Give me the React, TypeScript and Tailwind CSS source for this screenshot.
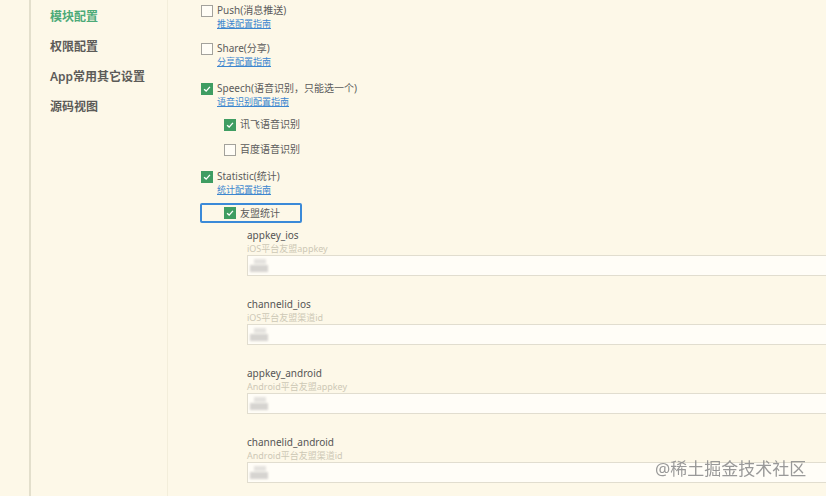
import React from 'react';

const font = { fontFamily: '"Noto Sans", "Noto Sans CJK SC", sans-serif' };

function Box({ checked }: { checked: boolean }) {
  if (checked) {
    return (
      <span className="flex h-[12px] w-[12px] shrink-0 items-center justify-center bg-[#3f9d62]">
        <svg viewBox="0 0 12 12" className="h-[10px] w-[10px]">
          <path d="M2.5 6.2 L5 8.5 L9.5 3.5" fill="none" stroke="#ffffff" strokeWidth="1.6" />
        </svg>
      </span>
    );
  }
  return <span className="h-[12px] w-[12px] shrink-0 border border-[#a3a29c] bg-[#fffdf6]" />;
}

function Option({ label, link, checked, className = '' }: { label: string; link: string; checked: boolean; className?: string }) {
  return (
    <div className={className}>
      <div className="flex h-[13px] items-center gap-[4px] text-[10px] text-[#5b5b5b]">
        <Box checked={checked} />
        <span>{label}</span>
      </div>
      <div className="ml-[16px] h-[13px] text-[9px] leading-[13px] text-[#3c86cf] underline">{link}</div>
    </div>
  );
}

function Sub({ label, checked }: { label: string; checked: boolean }) {
  return (
    <div className="flex h-[25px] items-center gap-[4px] pl-[23px] text-[10px] text-[#5b5b5b]">
      <Box checked={checked} />
      <span>{label}</span>
    </div>
  );
}

function Field({ name, desc, first }: { name: string; desc: string; first?: boolean }) {
  return (
    <div className={first ? 'mt-[6px]' : 'mt-[22px]'}>
      <div className="h-[13px] text-[10px] leading-[13px] text-[#555555]">{name}</div>
      <div className="h-[13px] text-[9px] leading-[13px] text-[#cdc8b6]">{desc}</div>
      <div className="flex h-[21px] items-center border-y border-l border-[#e1ddcf] bg-[#fffdf7] pl-[2px]">
        <div className="flex flex-col gap-[1px] blur-[1px]">
          <div className="ml-[4px] h-[5px] w-[12px] bg-[#e4e2de]" />
          <div className="h-[7px] w-[18px] bg-[#d6d4d0]" />
        </div>
      </div>
    </div>
  );
}

export default function App() {
  return (
    <div className="relative flex h-[496px] w-[826px] overflow-hidden bg-[#fdf8e8]" style={font}>
      <div className="w-[29px] shrink-0" />
      <div className="w-[139px] shrink-0 border-l-2 border-r border-l-[#e3dfcc] border-r-[#f3eedb] pl-[19px] pt-[2px] text-[12px] font-semibold text-[#5c5b58]">
        <div className="h-[30px] leading-[30px] text-[#4caa78]">模块配置</div>
        <div className="h-[30px] leading-[30px]">权限配置</div>
        <div className="h-[30px] leading-[30px]">App常用其它设置</div>
        <div className="h-[30px] leading-[30px]">源码视图</div>
      </div>
      <div className="flex-1 pl-[33px] pt-[4px]">
        <Option label="Push(消息推送)" link="推送配置指南" checked={false} />
        <Option label="Share(分享)" link="分享配置指南" checked={false} className="mt-[12px]" />
        <Option label="Speech(语音识别，只能选一个)" link="语音识别配置指南" checked className="mt-[14px]" />
        <div className="mt-[4px]">
          <Sub label="讯飞语音识别" checked />
          <Sub label="百度语音识别" checked={false} />
        </div>
        <Option label="Statistic(统计)" link="统计配置指南" checked className="mt-[8px]" />
        <div className="-ml-[1px] mt-[7px] flex h-[20px] w-[102px] items-center gap-[4px] rounded-[2px] border-2 border-[#3b8ad8] pl-[22px] text-[10px] text-[#5b5b5b]">
          <Box checked />
          <span>友盟统计</span>
        </div>
        <div className="pl-[46px]">
          <Field first name="appkey_ios" desc="iOS平台友盟appkey" />
          <Field name="channelid_ios" desc="iOS平台友盟渠道id" />
          <Field name="appkey_android" desc="Android平台友盟appkey" />
          <Field name="channelid_android" desc="Android平台友盟渠道id" />
        </div>
      </div>
      <div className="absolute left-[655px] top-[456px] text-[17px] text-[#8f8f8f] opacity-90">@稀土掘金技术社区</div>
    </div>
  );
}
